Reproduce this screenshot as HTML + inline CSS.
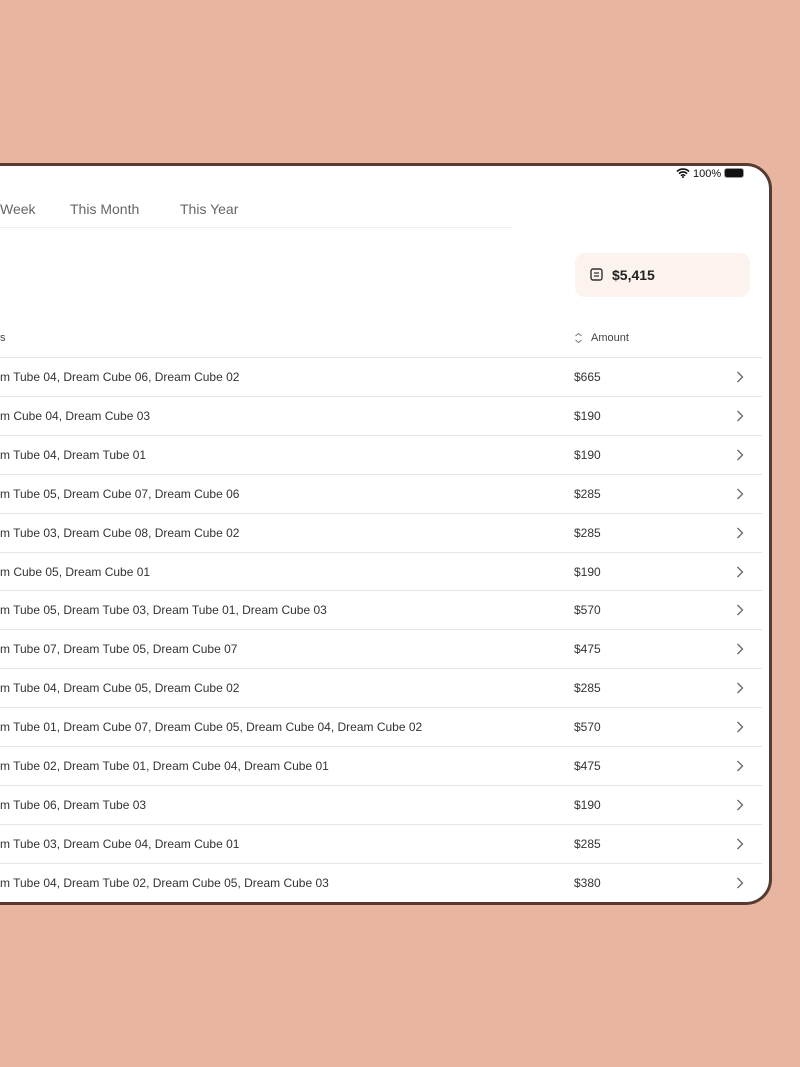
<!DOCTYPE html>
<html><head><style>
body{margin:0;width:800px;height:1067px;background:#e8b5a0;position:relative;overflow:hidden;font-family:"Liberation Sans",sans-serif;}
.frame{position:absolute;left:-40px;top:163px;width:806px;height:736px;background:#fff;border:3px solid #5a3a2e;border-radius:26px;overflow:hidden}
.a{position:absolute;white-space:nowrap}
.tab{top:201px;font-size:14px;color:#666;}
.row{position:absolute;left:0;width:762px;height:39px;border-top:1px solid #e6e6e6;font-size:12px;color:#333}
.row span{position:absolute;top:12px}
</style></head><body>
<div class="frame"></div>
<div class="a" style="left:676px;top:168px;font-size:11px;color:#111">
<svg width="14" height="10" viewBox="0 0 14 10" style="vertical-align:-1px"><path d="M1 3.5a8.5 8.5 0 0 1 12 0M3 5.7a5.5 5.5 0 0 1 8 0M5 7.8a2.5 2.5 0 0 1 4 0" stroke="#111" stroke-width="1.6" fill="none"/><circle cx="7" cy="9" r="1" fill="#111"/></svg> 100%
<span style="display:inline-block;width:18px;height:8px;background:#111;border-radius:3px;vertical-align:-1px;border:1px solid #999"></span></div>
<div class="a tab" style="left:0">Week</div>
<div class="a tab" style="left:70px">This Month</div>
<div class="a tab" style="left:180px">This Year</div>
<div class="a" style="left:0;top:227px;width:512px;height:1px;background:#eee"></div>
<div class="a" style="left:575px;top:253px;width:175px;height:44px;background:#fcf3ef;border-radius:10px"></div>
<svg class="a" style="left:590px;top:268px" width="13" height="13" viewBox="0 0 13 13"><rect x="1" y="1" width="11" height="11" rx="2" fill="none" stroke="#333" stroke-width="1.4"/><path d="M4 5h5M4 8h5" stroke="#333" stroke-width="1.2"/></svg>
<div class="a" style="left:612px;top:267px;font-size:14px;font-weight:bold;color:#222">$5,415</div>
<div class="a" style="left:0;top:332px;font-size:11px;color:#444">s</div>
<svg class="a" style="left:574px;top:332px" width="9" height="12" viewBox="0 0 9 12"><path d="M1.5 4L4.5 1.5 7.5 4M1.5 8l3 2.5 3-2.5" fill="none" stroke="#777" stroke-width="1"/></svg>
<div class="a" style="left:591px;top:332px;font-size:11px;color:#444">Amount</div>
<div id="rows"></div>
<script>
var d=[["m Tube 04, Dream Cube 06, Dream Cube 02","$665"],["m Cube 04, Dream Cube 03","$190"],["m Tube 04, Dream Tube 01","$190"],["m Tube 05, Dream Cube 07, Dream Cube 06","$285"],["m Tube 03, Dream Cube 08, Dream Cube 02","$285"],["m Cube 05, Dream Cube 01","$190"],["m Tube 05, Dream Tube 03, Dream Tube 01, Dream Cube 03","$570"],["m Tube 07, Dream Tube 05, Dream Cube 07","$475"],["m Tube 04, Dream Cube 05, Dream Cube 02","$285"],["m Tube 01, Dream Cube 07, Dream Cube 05, Dream Cube 04, Dream Cube 02","$570"],["m Tube 02, Dream Tube 01, Dream Cube 04, Dream Cube 01","$475"],["m Tube 06, Dream Tube 03","$190"],["m Tube 03, Dream Cube 04, Dream Cube 01","$285"],["m Tube 04, Dream Tube 02, Dream Cube 05, Dream Cube 03","$380"]];
var h="";d.forEach(function(r,i){h+='<div class="row" style="top:'+(357+i*38.9)+'px"><span style="left:0">'+r[0]+'</span><span style="left:574px">'+r[1]+'</span><svg style="position:absolute;left:736px;top:13px" width="8" height="12" viewBox="0 0 8 12"><path d="M1.5 1l5 5-5 5" fill="none" stroke="#666" stroke-width="1.3"/></svg></div>';});
document.getElementById("rows").innerHTML=h;
</script>
</body></html>
